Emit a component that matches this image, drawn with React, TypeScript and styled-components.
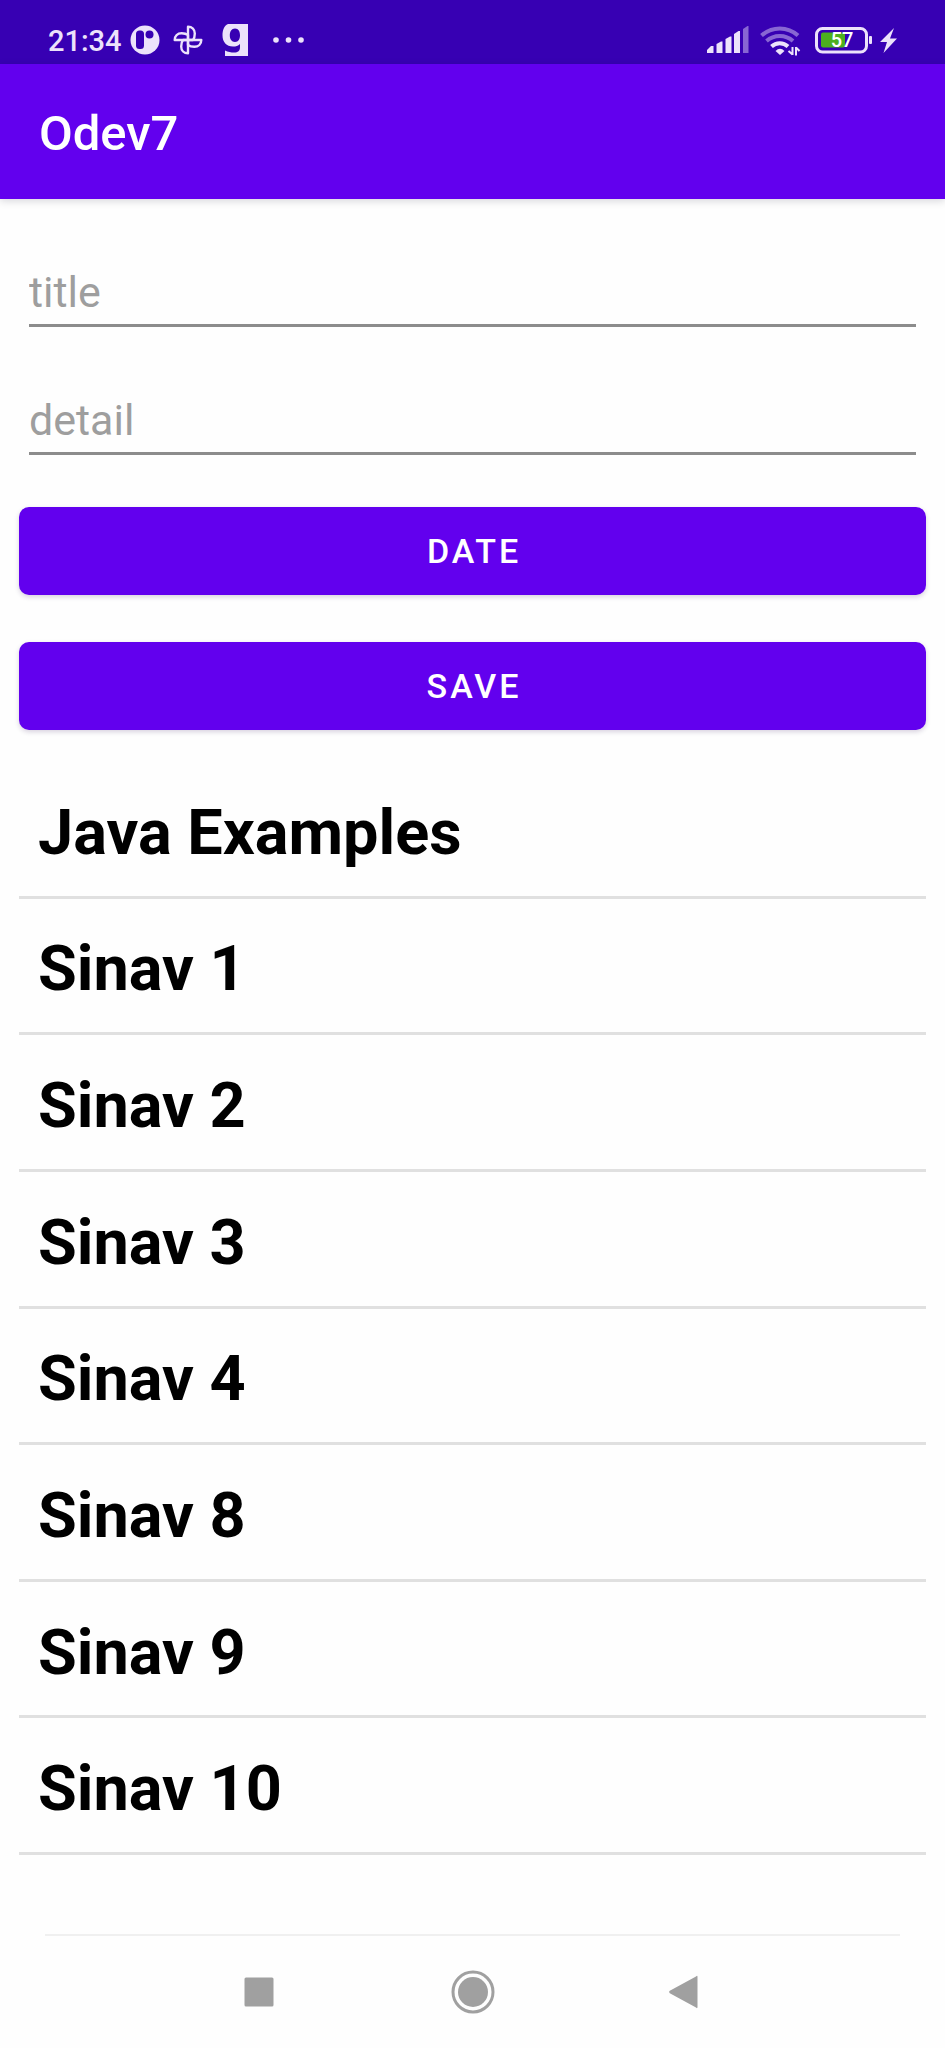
import React from "react";
import styled, { createGlobalStyle } from "styled-components";

const GlobalStyle = createGlobalStyle`
  * { box-sizing: border-box; }
  body { margin: 0; background: #fefefe; font-family: Roboto, sans-serif; }
`;

const Screen = styled.div`
  min-height: 100vh;
  display: flex;
  flex-direction: column;
`;

const StatusBar = styled.div`
  height: 64px;
  padding: 18px 48px 0;
  display: flex;
  justify-content: space-between;
  background: #3700b3;
  color: #ece2fb;
`;

const StatusGroup = styled.div`
  height: 44px;
  display: flex;
  align-items: center;
`;

const IconSlot = styled.span<{ $width: number }>`
  width: ${(p) => p.$width}px;
  flex: none;

  svg { display: block; }
`;

const Clock = styled.time`
  margin-right: 8px;
  padding-top: 2px;
  font-size: 29px;
  line-height: 42px;
  font-weight: 500;
`;

const AppBar = styled.header`
  height: 135px;
  padding: 4px 39px 0;
  display: flex;
  align-items: center;
  background: #6200ee;
  box-shadow: 0 2px 8px rgba(0, 0, 40, 0.16);
`;

const AppTitle = styled.h1`
  margin: 0;
  font-size: 49px;
  line-height: 56px;
  font-weight: 500;
  color: #fff;
`;

const Content = styled.main`
  flex: 1;
  padding: 0 19px 79px;
  display: flex;
  flex-direction: column;
`;

const NoteForm = styled.form`
  padding: 48px 0 32px;
  display: flex;
  flex-direction: column;
  gap: 52px;
`;

const Fields = styled.div`
  padding: 0 10px;
  display: flex;
  flex-direction: column;
  gap: 48px;
`;

const Actions = styled.div`
  display: flex;
  flex-direction: column;
  gap: 47px;
`;

const Field = styled.input`
  width: 100%;
  height: 80px;
  padding: 13px 0 0;
  border: 0;
  border-bottom: 3px solid #8c8c8c;
  background: none;
  color: #212121;
  font: 400 43px/60px Roboto, sans-serif;
  outline: none;

  &::placeholder { color: #9e9e9e; opacity: 1; }
`;

const ActionButton = styled.button`
  height: 88px;
  padding: 0 0 0 3px;
  border: 0;
  border-radius: 10px;
  background: #6200ee;
  box-shadow: 0 2px 5px rgba(40, 0, 80, 0.18);
  color: #fff;
  font: 500 34px/40px Roboto, sans-serif;
  letter-spacing: 3px;
`;

const NoteList = styled.ul`
  flex: 1;
  margin: 0;
  padding: 0;
  list-style: none;
  display: grid;
  grid-auto-rows: 1fr;
`;

const NoteRow = styled.li`
  padding: 8px 19px 0;
  display: flex;
  align-items: center;
  border-bottom: 3px solid #e0e0e0;
  font-size: 63px;
  line-height: 74px;
  font-weight: 700;
  color: #000;
`;

const NavBar = styled.nav`
  height: 114px;
  margin: 0 45px;
  display: flex;
  justify-content: center;
  border-top: 2px solid #f0f0f0;
`;

const NavButton = styled.button`
  width: 25%;
  padding: 0;
  border: 0;
  background: none;
  display: flex;
  align-items: center;
  justify-content: center;
  color: #a0a0a0;
`;

const notes = [
  "Java Examples",
  "Sinav 1",
  "Sinav 2",
  "Sinav 3",
  "Sinav 4",
  "Sinav 8",
  "Sinav 9",
  "Sinav 10",
];

const BadgeIcon = () => (
  <svg width="30" height="30" viewBox="0 0 30 30">
    <circle cx="15" cy="15" r="14.5" fill="currentColor" />
    <rect x="6" y="5.5" width="8" height="18.5" rx="3.5" fill="#3700b3" />
    <circle cx="19.5" cy="9.5" r="4" fill="#3700b3" />
  </svg>
);

const PinwheelIcon = () => (
  <svg width="30" height="30" viewBox="0 0 30 30" fill="none" stroke="currentColor" strokeWidth="2.4" strokeLinejoin="round">
    {[0, 90, 180, 270].map((angle) => (
      <path key={angle} d="M15 15V1.7C19 1.7 21.8 4.600 21.8 8.600C21.8 11.500 21.200 13.500 20 15Z" transform={`rotate(${angle} 15 15)`} />
    ))}
  </svg>
);

const LetterTile = () => (
  <svg width="26" height="32" viewBox="0 0 26 32">
    <path
      fill="currentColor"
      fillRule="evenodd"
      d="M3 0H26V32H3V26.5C6 28 9 28.5 12 28.5C16 28.5 18 27 18 23V20C16 22 14 22.5 11 22.5C4.5 22.5 0.5 18 0.5 11.5C0.5 6 2 2 6 0ZM13 4.5C9.500 4.500 7.800 7.500 7.800 11.300S9.500 18 13 18S18 15 18 11.300S16.500 4.500 13 4.500Z"
    />
  </svg>
);

const MoreIcon = () => (
  <svg width="32" height="6" viewBox="0 0 32 6" fill="currentColor">
    <circle cx="3" cy="3" r="2.8" />
    <circle cx="15.5" cy="3" r="2.8" />
    <circle cx="28" cy="3" r="2.8" />
  </svg>
);

const SignalIcon = () => (
  <svg width="42" height="28" viewBox="0 0 42 28" fill="currentColor">
    <path d="M0 27V24L4 20H6.500V27Z" />
    <path d="M9.500 27V18L14 15.500H15.500V27Z" />
    <path d="M18.500 27V13L23 10.500H24.500V27Z" />
    <path d="M27 27V8L31.500 5H33V27Z" />
    <path d="M36 27V3L40.500 0H41.500V27Z" opacity="0.45" />
  </svg>
);

const WifiIcon = () => (
  <svg width="42" height="32" viewBox="0 0 42 32" fill="none" stroke="currentColor" strokeWidth="4">
    <path d="M1.500 11.500A27 27 0 0 1 38 11.500" opacity="0.45" />
    <path d="M6.500 17A20 20 0 0 1 33 17" opacity="0.45" />
    <path d="M11.500 22.500A12 12 0 0 1 28 22.500" />
    <path d="M15.500 27Q20 22.500 24.500 27L20 31Z" fill="currentColor" stroke="none" />
    <path d="M32.500 23V31M28.500 27L32.500 30.500M36 31.500V23M36 23.500L39.500 27" strokeWidth="2" />
  </svg>
);

const BatteryIcon = () => (
  <svg width="58" height="28" viewBox="0 0 58 28">
    <rect x="1.500" y="2.500" width="50" height="23.500" rx="6" fill="none" stroke="currentColor" strokeWidth="3" />
    <rect x="6" y="6.500" width="24" height="15" rx="2" fill="#4caf1f" />
    <rect x="54" y="10" width="3" height="8" rx="1" fill="currentColor" />
    <text x="27" y="21" textAnchor="middle" fontFamily="Roboto, sans-serif" fontSize="20" fontWeight="500" fill="#fff">57</text>
  </svg>
);

const BoltIcon = () => (
  <svg width="17" height="25" viewBox="0 0 17 25" fill="currentColor">
    <path d="M14 0L0 14H7L3.500 25L17 10.500H10Z" />
  </svg>
);

export default function App() {
  return (
    <Screen>
      <GlobalStyle />
      <StatusBar>
        <StatusGroup>
          <Clock>21:34</Clock>
          <IconSlot $width={43}><BadgeIcon /></IconSlot>
          <IconSlot $width={49}><PinwheelIcon /></IconSlot>
          <IconSlot $width={51}><LetterTile /></IconSlot>
          <IconSlot $width={32}><MoreIcon /></IconSlot>
        </StatusGroup>
        <StatusGroup>
          <IconSlot $width={53}><SignalIcon /></IconSlot>
          <IconSlot $width={55}><WifiIcon /></IconSlot>
          <IconSlot $width={65}><BatteryIcon /></IconSlot>
          <IconSlot $width={17}><BoltIcon /></IconSlot>
        </StatusGroup>
      </StatusBar>
      <AppBar>
        <AppTitle>Odev7</AppTitle>
      </AppBar>
      <Content>
        <NoteForm onSubmit={(event) => event.preventDefault()}>
          <Fields>
            <Field type="text" placeholder="title" aria-label="title" />
            <Field type="text" placeholder="detail" aria-label="detail" />
          </Fields>
          <Actions>
            <ActionButton type="button">DATE</ActionButton>
            <ActionButton type="submit">SAVE</ActionButton>
          </Actions>
        </NoteForm>
        <NoteList>
          {notes.map((note) => (
            <NoteRow key={note}>{note}</NoteRow>
          ))}
        </NoteList>
      </Content>
      <NavBar>
        <NavButton type="button" aria-label="Recent apps">
          <svg width="30" height="30" viewBox="0 0 30 30" fill="currentColor">
            <rect x="0.500" y="0.500" width="29" height="29" rx="1.500" />
          </svg>
        </NavButton>
        <NavButton type="button" aria-label="Home">
          <svg width="44" height="44" viewBox="0 0 44 44">
            <circle cx="22" cy="22" r="20" fill="none" stroke="currentColor" strokeWidth="3" />
            <circle cx="22" cy="22" r="15" fill="currentColor" />
          </svg>
        </NavButton>
        <NavButton type="button" aria-label="Back">
          <svg width="34" height="34" viewBox="0 0 34 34" fill="currentColor">
            <path d="M27 1.500Q28.500 0 28.500 2V32Q28.500 34 27 32.500L0.800 18.200Q-0.500 17 0.800 15.800Z" />
          </svg>
        </NavButton>
      </NavBar>
    </Screen>
  );
}
